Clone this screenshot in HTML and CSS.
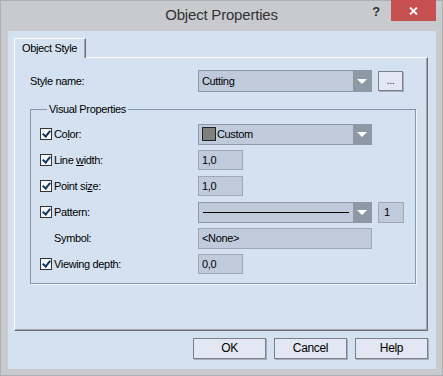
FILE: index.html
```html
<!DOCTYPE html>
<html lang="en">
<head>
    <meta charset="UTF-8">
    <title>Object Properties</title>
    <link rel="stylesheet" href="styles.css">
</head>
<body>

<div class="window">
    <!-- Titelleiste -->
    <div class="titlebar">
        <div class="title">Object Properties</div>
        <div class="help">?</div>
        <div class="close">
            <svg width="9" height="8" viewBox="0 0 9 8"><path d="M1 0.5 L8 7.5 M8 0.5 L1 7.5" stroke="#fff" stroke-width="1.8"/></svg>
        </div>
    </div>

    <div class="client">
        <div class="tabs">
            <div class="tab">Object Style</div>
        </div>

        <div class="panel">
            <div class="name-row">
                <div class="label name-label">Style name:</div>
                <div class="combo wide"><span class="combo-text">Cutting</span><span class="drop"></span></div>
                <div class="btn dots">...</div>
            </div>

            <fieldset class="group">
                <legend>Visual Properties</legend>

                <div class="row">
                    <span class="check"></span>
                    <div class="label">Co<u>l</u>or:</div>
                    <div class="combo wide"><span class="swatch"></span><span class="combo-text">Custom</span><span class="drop"></span></div>
                </div>
                <div class="row">
                    <span class="check"></span>
                    <div class="label">Line <u>w</u>idth:</div>
                    <div class="field small">1,0</div>
                </div>
                <div class="row">
                    <span class="check"></span>
                    <div class="label">Point si<u>z</u>e:</div>
                    <div class="field small">1,0</div>
                </div>
                <div class="row">
                    <span class="check"></span>
                    <div class="label">Pattern:</div>
                    <div class="combo wide"><span class="pattern-line"></span><span class="drop"></span></div>
                    <div class="field count">1</div>
                </div>
                <div class="row">
                    <div class="label plain">Symbol:</div>
                    <div class="field symbol">&lt;None&gt;</div>
                </div>
                <div class="row">
                    <span class="check"></span>
                    <div class="label">Viewing depth:</div>
                    <div class="field small">0,0</div>
                </div>
            </fieldset>
        </div>

        <div class="buttons">
            <div class="btn action">OK</div>
            <div class="btn action">Cancel</div>
            <div class="btn action">Help</div>
        </div>
    </div>
</div>

</body>
</html>
```

FILE: styles.css
```css
body {
    margin: 0;
    padding: 0;
    font-family: "Liberation Sans", Arial, sans-serif;
    font-size: 11px;
    letter-spacing: -0.35px;
    color: #000;
}

.window {
    width: 443px;
    height: 376px;
    background: #c9cacd;
    box-shadow: inset 0 0 0 1px #aeb0b4;
    display: flex;
    flex-direction: column;
}

/* Titelleiste */
.titlebar {
    height: 31px;
    display: flex;
    flex-shrink: 0;
}

.title {
    flex: 1;
    padding-left: 82px;
    text-align: center;
    font-size: 15px;
    letter-spacing: -0.2px;
    line-height: 30px;
    color: #333;
}

.help {
    width: 30px;
    text-align: center;
    font-size: 13px;
    font-weight: bold;
    line-height: 23px;
    color: #333;
}

.close {
    width: 45px;
    height: 21px;
    margin-right: 7px;
    background: #c75050;
    display: flex;
    justify-content: center;
    align-items: center;
}

.client {
    flex: 1;
    margin: 0 7px 7px 8px;
    padding: 7px 8px 0 6px;
    background: #d3e1f0;
    display: flex;
    flex-direction: column;
}

/* Reiter */
.tabs {
    display: flex;
}

.tab {
    position: relative;
    width: 72px;
    height: 20px;
    margin-bottom: -1px;
    box-sizing: border-box;
    padding-left: 7px;
    line-height: 19px;
    background: #d3e1f0;
    border-top: 1px solid #fff;
    border-left: 1px solid #fff;
    border-right: 1px solid #6f6f6f;
    box-shadow: inset -1px 0 0 #a3a7ad;
}

.panel {
    height: 274px;
    box-sizing: border-box;
    padding: 12px 12px 0 15px;
    border-top: 1px solid #fff;
    border-left: 1px solid #fff;
    border-right: 1px solid #6f6f6f;
    border-bottom: 1px solid #6f6f6f;
    box-shadow: inset -1px -1px 0 #a3a7ad;
}

.name-row {
    display: flex;
    align-items: center;
}

.label {
    width: 144px;
}

.name-label {
    width: 168px;
}

.label.plain {
    padding-left: 14px;
}

/* Kombinationsfelder */
.combo {
    height: 21px;
    box-sizing: border-box;
    border: 1px solid #8e99a6;
    background: #bfcbdb;
    display: flex;
    align-items: center;
}

.combo.wide {
    width: 174px;
}

.name-row .combo {
    height: 22px;
}

.combo-text {
    flex: 1;
    padding-left: 3px;
}

.swatch {
    width: 12px;
    height: 12px;
    margin-left: 3px;
    background: #808080;
    border: 1px solid #222;
}

.swatch + .combo-text {
    padding-left: 1px;
}

.pattern-line {
    flex: 1;
    height: 1px;
    margin: 0 4px;
    background: #000;
}

.drop {
    width: 18px;
    align-self: stretch;
    background: #8e99a6;
    display: flex;
    justify-content: center;
    align-items: center;
}

.drop::after {
    content: "";
    border-left: 5px solid transparent;
    border-right: 5px solid transparent;
    border-top: 5px solid #fff;
}

.field {
    height: 20px;
    box-sizing: border-box;
    padding-left: 3px;
    line-height: 18px;
    border: 1px solid #a1a8b1;
    background: #bfcbdb;
}

.field.small {
    width: 45px;
}

.field.count {
    width: 26px;
    height: 21px;
    margin-left: 6px;
    padding-left: 5px;
    line-height: 19px;
}

.field.symbol {
    width: 174px;
    height: 21px;
    line-height: 19px;
}

/* Gruppe */
.group {
    width: 386px;
    box-sizing: border-box;
    margin: 11px 0 0 0;
    padding: 8px 0 9px 9px;
    border: 1px solid #8497b0;
    box-shadow: 1px 1px 0 #f2f6fb;
}

.group legend {
    margin-left: 7px;
    padding: 0 2px;
    line-height: 13px;
}

.row {
    height: 20px;
    margin-bottom: 6px;
    display: flex;
    align-items: center;
}

.row:last-child {
    margin-bottom: 0;
}

.check {
    width: 12px;
    height: 12px;
    box-sizing: border-box;
    margin-right: 2px;
    border: 1px solid #333;
    background: #f3f6fa;
    position: relative;
}

.check::after {
    content: "";
    position: absolute;
    left: 3px;
    top: 0px;
    width: 3px;
    height: 6px;
    border-right: 2px solid #17365d;
    border-bottom: 2px solid #17365d;
    transform: rotate(40deg);
}

/* Schaltflächen */
.btn {
    box-sizing: border-box;
    background: #e2e7f3;
    border: 1px solid #7b8089;
    box-shadow: 1px 1px 0 #a9afb9;
    text-align: center;
}

.dots {
    width: 25px;
    height: 20px;
    margin-left: 6px;
    line-height: 17px;
    color: #3a2a6a;
}

.buttons {
    margin-top: 7px;
    display: flex;
    justify-content: flex-end;
    gap: 8px;
}

.action {
    width: 73px;
    height: 21px;
    line-height: 19px;
    font-size: 12px;
}
```
